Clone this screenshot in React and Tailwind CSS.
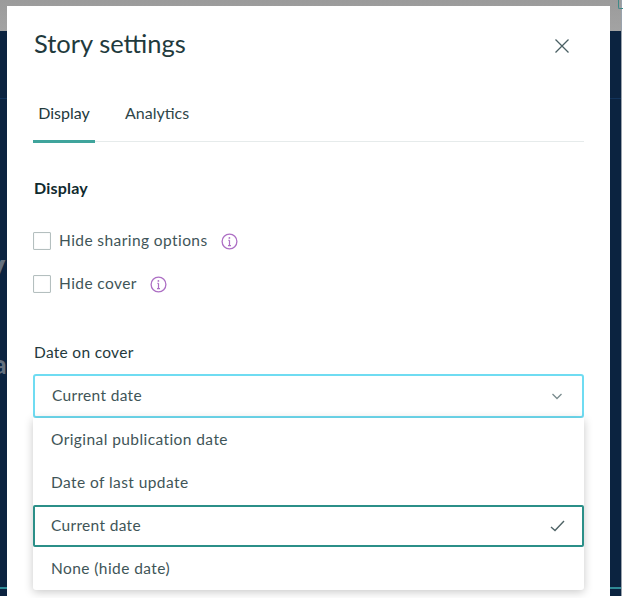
import React from "react";

const font = { fontFamily: '"Lato", "Noto Sans", sans-serif' };

function Info() {
  return (
    <svg width="17" height="17" viewBox="0 0 17 17" fill="none" stroke="#ad6fc4" className="shrink-0">
      <circle cx="8.5" cy="8.5" r="7.4" strokeWidth="1.3" />
      <path d="M8.5 7.2V12.4M7 12.6H10M7.4 7.4H8.5" strokeWidth="1.2" />
      <circle cx="8.4" cy="4.9" r="0.9" fill="#ad6fc4" stroke="none" />
    </svg>
  );
}

function Check({ label }) {
  return (
    <div className="flex items-center h-[18px]">
      <div className="w-[18px] h-[18px] border border-[#b4bfbf] rounded-[1px] bg-white shadow-[inset_0_0_1px_#c8d0d0]" />
      <span className="ml-[8px] text-[15.5px] tracking-[0.42px] text-[#3f5558]">{label}</span>
      <span className="ml-[13px] flex"><Info /></span>
    </div>
  );
}

export default function App() {
  return (
    <div className="w-[626px] h-[598px] overflow-hidden bg-white relative" style={font}>
      <div className="absolute left-0 top-0 w-[622px] h-[596px] bg-[#0b2340] border-r border-[#9aa3ad] overflow-hidden">
        <div className="h-[31px] bg-gradient-to-b from-[#9b9b9b] to-[#a3a3a3]" />
        <div className="h-[1px] mt-[67px] bg-[#12335a]" />
        <div className="h-[2px] mt-[488px] bg-[#2f8a96]" />
        <span className="absolute left-[-16px] top-[252px] text-[30px] leading-[36px] font-black text-[#66717f]">V</span>
        <span className="absolute left-[-7px] top-[346px] text-[27px] leading-[36px] font-bold text-[#66717f]">a</span>
      </div>
      <div className="absolute left-[618px] top-0 w-[5px] h-[9px] border-l border-b border-[#3f8a88] rounded-bl-[2px]" />
      <div className="absolute left-[7px] top-[6px] w-[603px] h-[592px] bg-white pl-[26px] pr-[26px] flex flex-col">
        <div className="flex justify-between items-center h-[24px] mt-[26px]">
          <h1 className="ml-[1px] text-[25.5px] leading-none text-[#1f3a3d]">Story settings</h1>
          <svg width="16" height="16" viewBox="0 0 16 16" className="mr-[14px] mt-[3px]" stroke="#4a6063" strokeWidth="1.3" fill="none">
            <path d="M1.5 1.5L14.5 14.5M14.5 1.5L1.5 14.5" />
          </svg>
        </div>
        <div className="mt-[45px] flex border-b border-[#e6ebeb] h-[41px]">
          <div className="w-[62px] text-center text-[16px] leading-[24px] text-[#23393c] border-b-[3px] border-[#3fa49c] h-[42px]">Display</div>
          <div className="ml-[30px] text-[16px] leading-[24px] text-[#2f4649]">Analytics</div>
        </div>
        <div className="mt-[36px] ml-[1px] text-[16px] leading-[20px] font-bold text-[#0f2a2e] tracking-[0.2px]">Display</div>
        <div className="mt-[34px] flex flex-col gap-[25px]">
          <Check label="Hide sharing options" />
          <Check label="Hide cover" />
        </div>
        <div className="mt-[49px] ml-[1px] text-[15.5px] leading-[20px] text-[#24393c] tracking-[0.3px]">Date on cover</div>
        <div className="mt-[12px] relative">
          <div className="h-[44px] border-2 border-[#6fdcf2] rounded-[3px] flex items-center justify-between pl-[17px] pr-[20px] text-[15.5px] tracking-[0.32px] text-[#3f5558]">
            <span>Current date</span>
            <svg width="10" height="7" viewBox="0 0 10 7" fill="none" stroke="#7a8c8e" strokeWidth="1.3">
              <path d="M0.5 1L5 5.5L9.5 1" />
            </svg>
          </div>
          <div className="absolute left-0 right-0 top-[44px] bg-white rounded-b-[3px] shadow-[0_2px_10px_rgba(0,0,0,0.22)] h-[172px] text-[15.5px] tracking-[0.42px] text-[#3f5558]">
            <div className="h-[43px] flex items-center pl-[18px]">Original publication date</div>
            <div className="h-[43px] flex items-center pl-[18px]">Date of last update</div>
            <div className="mt-[1px] h-[42px] flex items-center justify-between pl-[16px] pr-[17px] border-2 border-[#2b8f88] rounded-[2px]">
              <span className="tracking-[0.32px]">Current date</span>
              <svg width="15" height="12" viewBox="0 0 15 12" fill="none" stroke="#4f6366" strokeWidth="1.4">
                <path d="M1 7L5 10.5L14 1" />
              </svg>
            </div>
            <div className="h-[43px] flex items-center pl-[18px] pt-[1px]">None (hide date)</div>
          </div>
        </div>
      </div>
    </div>
  );
}
